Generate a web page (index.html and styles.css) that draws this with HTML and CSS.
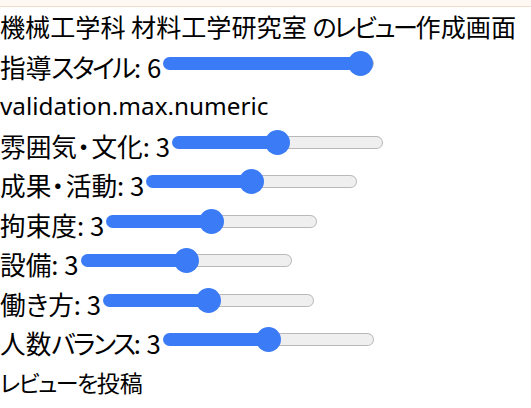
FILE: index.html
```html
<!DOCTYPE html>
<html lang="ja">
<head>
<meta charset="utf-8">
<title>レビュー作成</title>
<link rel="stylesheet" href="styles.css">
</head>
<body>
<header class="topbar"></header>
<main class="form">
  <h1 class="title">機械工学科 材料工学研究室 <span class="kana">のレビュー</span>作成画面</h1>
  <div class="row"><label class="label">指導<span class="kana">スタイル</span>: 6</label><input class="slider" type="range" min="1" max="5" value="5" style="--f:1"></div>
  <p class="error">validation.max.numeric</p>
  <div class="row"><label class="label">雰囲気<span class="mid">・</span>文化: 3</label><input class="slider" type="range" min="1" max="5" value="3" style="--f:0.5"></div>
  <div class="row"><label class="label">成果<span class="mid">・</span>活動: 3</label><input class="slider" type="range" min="1" max="5" value="3" style="--f:0.5"></div>
  <div class="row"><label class="label">拘束度: 3</label><input class="slider" type="range" min="1" max="5" value="3" style="--f:0.5"></div>
  <div class="row"><label class="label">設備: 3</label><input class="slider" type="range" min="1" max="5" value="3" style="--f:0.5"></div>
  <div class="row"><label class="label">働き方: 3</label><input class="slider" type="range" min="1" max="5" value="3" style="--f:0.5"></div>
  <div class="row"><label class="label">人数<span class="kana">バランス</span>: 3</label><input class="slider" type="range" min="1" max="5" value="3" style="--f:0.5"></div>
  <button class="submit" type="button"><span class="kana-sm">レビューを</span>投稿</button>
</main>
</body>
</html>
```
FILE: styles.css
```css
html, body {
  margin: 0;
  padding: 0;
  background: #ffffff;
}
body {
  font-family: "Noto Sans CJK JP", sans-serif;
  font-size: 25.7px;
  color: #000;
  font-feature-settings: "palt";
}
.topbar {
  height: 6px;
  background: #fef8f3;
  border-bottom: 1px solid #f0dcca;
}
.form {
  display: flex;
  flex-direction: column;
  align-items: flex-start;
}
.title {
  margin: 0;
  font-size: 25.1px;
  font-weight: normal;
  line-height: 39.5px;
  white-space: nowrap;
}
.kana {
  letter-spacing: -2.4px;
}
.kana-sm {
  letter-spacing: -1.6px;
}
.mid {
  letter-spacing: 1.5px;
}
.row {
  display: flex;
  align-items: center;
  height: 39.5px;
}
.label {
  line-height: 39.5px;
  white-space: nowrap;
}
.error {
  margin: 0;
  line-height: 39.5px;
  font-family: "Noto Sans", "Noto Sans CJK JP", sans-serif;
  font-size: 24.3px;
}
.slider {
  -webkit-appearance: none;
  appearance: none;
  width: 211px;
  height: 25px;
  margin: 0 0 6px 2px;
  padding: 0;
  background: transparent;
}
.slider::-webkit-slider-runnable-track {
  height: 13px;
  box-sizing: border-box;
  border: 1px solid transparent;
  border-radius: 7px;
  background:
    linear-gradient(#3b7cf6, #3b7cf6) 0 0 / calc(12.5px + var(--f) * 186px) 100% no-repeat border-box,
    linear-gradient(#efefef, #efefef) padding-box,
    linear-gradient(#b9b9b9, #b9b9b9) border-box;
}
.slider::-webkit-slider-thumb {
  -webkit-appearance: none;
  appearance: none;
  width: 25px;
  height: 25px;
  border-radius: 50%;
  background: #3b7cf6;
  border: none;
  margin-top: -7px;
}
.submit {
  font-family: inherit;
  font-size: 23px;
  font-feature-settings: "palt";
  line-height: 39.5px;
  background: none;
  border: none;
  padding: 0;
  color: #000;
  cursor: pointer;
}
```
